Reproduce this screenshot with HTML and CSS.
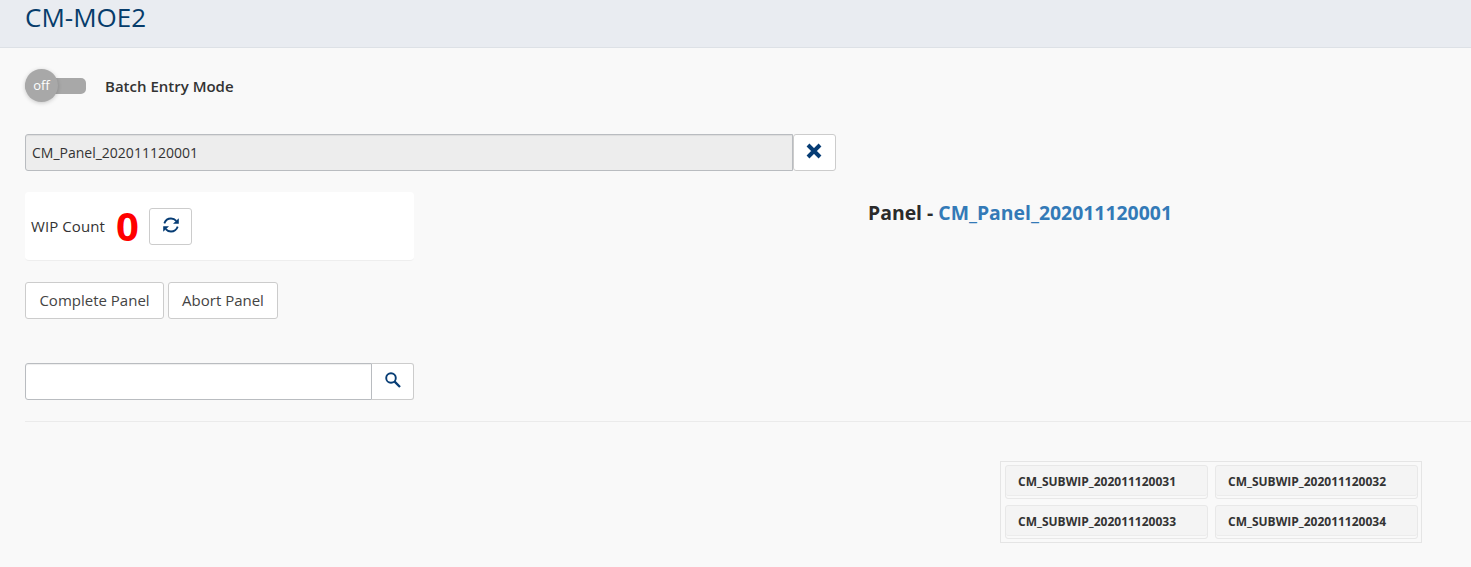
FILE: index.html
```html
<!DOCTYPE html>
<html lang="en">
<head>
<meta charset="utf-8">
<title>CM-MOE2</title>
<link rel="stylesheet" href="styles.css">
</head>
<body>
<header class="page-header"><h1 class="page-title">CM-MOE2</h1></header>
<main class="content">
  <div class="mode">
    <div class="switch"><span class="knob">off</span></div>
    <span class="mode-label">Batch Entry Mode</span>
  </div>
  <div class="panel-input">
    <div class="field field-disabled"><span class="field-text">CM_Panel_202011120001</span></div>
    <button class="btn icon-btn clear-btn" aria-label="Clear"><svg width="16" height="16" viewBox="0 0 16 16"><path d="M2 2 14 14M14 2 2 14" stroke="#063c74" stroke-width="4"/></svg></button>
  </div>
  <div class="columns">
    <section class="left">
      <div class="wip">
        <span class="wip-label">WIP Count</span>
        <strong class="wip-value">0</strong>
        <button class="btn icon-btn refresh-btn" aria-label="Refresh"><svg width="16" height="16" viewBox="0 0 16 16"><g fill="none" stroke="#063c74" stroke-width="1.8"><path d="M1.3 6.4C2.4 3.4 5 1.5 8 1.5c2.1 0 4 .9 5.3 2.4"/><path d="M14.7 9.6c-1.1 3-3.7 4.9-6.7 4.9-2.1 0-4-.9-5.3-2.4"/></g><path d="M15.8 1.2v5.5H10zM.2 14.8V9.3H6z" fill="#063c74"/></svg></button>
      </div>
      <div class="actions">
        <button class="btn complete-btn"><span class="complete-text">Complete Panel</span></button>
        <button class="btn abort-btn"><span class="abort-text">Abort Panel</span></button>
      </div>
      <div class="search">
        <div class="field search-field"></div>
        <button class="btn icon-btn search-btn" aria-label="Search"><svg width="16" height="16" viewBox="0 0 16 16"><circle cx="6" cy="6" r="4.8" fill="none" stroke="#063c74" stroke-width="1.9"/><path d="m9.4 9.4 5.6 5.6" stroke="#063c74" stroke-width="2.3"/></svg></button>
      </div>
    </section>
    <h2 class="panel-title"><span class="panel-word">Panel - </span><a class="panel-link">CM_Panel_202011120001</a></h2>
  </div>
  <hr class="divider">
  <div class="grid">
    <div class="cell"><span class="cell-text">CM_SUBWIP_202011120031</span></div>
    <div class="cell"><span class="cell-text">CM_SUBWIP_202011120032</span></div>
    <div class="cell"><span class="cell-text">CM_SUBWIP_202011120033</span></div>
    <div class="cell"><span class="cell-text">CM_SUBWIP_202011120034</span></div>
  </div>
</main>
</body>
</html>
```
FILE: styles.css
```css
* { box-sizing: border-box; }
body { margin: 0; height: 567px; overflow: hidden; background: #f9f9f9; color: #333; font: 14px/20px "Open Sans", sans-serif; }
.page-header { height: 48px; padding: 1px 25px 0; background: #e9ecf1; border-bottom: 1px solid #dde1e6; }
.page-title { margin: 0; font-size: 26px; line-height: 32px; font-weight: 400; color: #063c6b; }
.content { padding: 20px 0 0 25px; }
.mode { display: flex; align-items: center; height: 36px; }
.switch { display: flex; align-items: center; width: 61px; height: 16px; margin-right: 19px; background: #a8a8a8; border-radius: 8px 5px 5px 8px; }
.knob { width: 33px; height: 33px; margin-bottom: 1px; border-radius: 50%; background: #a8a8a8; box-shadow: 0 1px 4px rgba(0,0,0,.2); color: #fff; font-size: 13px; font-weight: 500; line-height: 32px; text-align: center; }
.mode-label { font-weight: 600; font-size: 15px; white-space: nowrap; }
.panel-input { display: flex; margin-top: 30px; width: 811px; height: 37px; }
.field { flex: 1; border: 1px solid #b9bcc0; border-radius: 3px 0 0 3px; background: #fff; box-shadow: inset 0 1px 1px rgba(0,0,0,.07); }
.field-disabled { padding: 8px 6px; background: #ededed; font-size: 14px; }
.btn { height: 37px; margin: 0; padding: 0 0 2px; border: 1px solid #ccc; border-radius: 3px; background: #fff; color: #444; font: 15px/20px "Open Sans", sans-serif; white-space: nowrap; }
.icon-btn { display: flex; align-items: center; justify-content: center; width: 43px; }
.clear-btn { padding: 0 1px 3px 0; }
.columns { display: flex; margin-top: 21px; }
.left { width: 389px; }
.wip { display: flex; align-items: center; height: 69px; padding-left: 6px; background: #fff; border-radius: 4px; border-bottom: 1px solid #eee; }
.wip-label { width: 85px; font-size: 15px; letter-spacing: .08px; }
.wip-value { width: 33px; color: #f00; font-size: 40px; line-height: 50px; }
.refresh-btn { padding-bottom: 2px; }
.actions { display: flex; gap: 4px; margin-top: 21px; }
.complete-btn { width: 139px; }
.abort-btn { width: 110px; }
.search { display: flex; height: 37px; margin-top: 44px; }
.search-btn { border-left: 0; border-radius: 0 3px 3px 0; width: 42px; padding-bottom: 3px; }
.panel-title { margin: 8px 0 0 454px; font-size: 19.4px; line-height: 26px; font-weight: 700; color: #2b2b2b; white-space: pre; }
.panel-link { color: #337ab7; }
.divider { height: 1px; margin: 21px 0 39px; border: 0; background: #ebebeb; }
.grid { display: grid; grid-template-columns: 203px 203px; grid-template-rows: 34px 34px; column-gap: 7px; row-gap: 6px; width: 422px; height: 82px; margin-left: 975px; padding: 3px 3px 3px 4px; border: 1px solid #e5e5e5; }
.cell { padding: 6px 12px; background: #f4f4f4; border: 1px solid #e8e8e8; border-radius: 3px; box-shadow: inset 0 -2px 0 #f9f9f9, inset 0 -3px 0 #ececec; font-size: 12px; font-weight: 700; white-space: nowrap; }
```
